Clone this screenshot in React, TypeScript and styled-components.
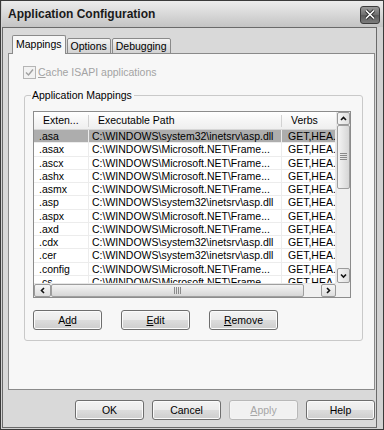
import React from "react";
import styled, { createGlobalStyle } from "styled-components";

const GlobalStyle = createGlobalStyle`
  html, body {
    margin: 0;
    padding: 0;
    background: #ffffff;
  }
  body {
    font-family: "Liberation Sans", Arial, sans-serif;
    font-size: 10.5px;
    color: #000;
  }
`;

const Window = styled.div`
  width: 384px;
  height: 430px;
  box-sizing: border-box;
  border: 1px solid #3a3a3a;
  background: #d2d2d2;
  padding: 0 0 1px 1px;
  display: flex;
  flex-direction: column;
`;

const TitleBar = styled.div`
  height: 26px;
  display: flex;
  align-items: center;
  justify-content: space-between;
  padding: 0 3px 0 6px;
  background: linear-gradient(#ececec, #dadada 45%, #c4c4c4);
`;

const Title = styled.span`
  font-size: 12px;
  font-weight: bold;
  color: #1a1a1a;
`;

const CloseButton = styled.div`
  width: 20px;
  height: 18px;
  box-sizing: border-box;
  border: 1px solid #3c3c3c;
  border-radius: 3px;
  background: linear-gradient(#9a9a9a, #6e6e6e 50%, #5a5a5a 51%, #7c7c7c);
  display: flex;
  align-items: center;
  justify-content: center;
  margin-top: 1px;
`;

const Client = styled.div`
  flex: 1;
  margin-right: 6px;
  border: 1px solid #6a6a6a;
  background: #d9d9d9;
  padding: 7px 1px 0 5px;
  display: flex;
  flex-direction: column;
`;

const TabStrip = styled.div`
  display: flex;
  align-items: flex-end;
  height: 19px;
  padding-left: 4px;
  margin-bottom: -1px;
  position: relative;
  z-index: 1;
`;

const Tab = styled.div<{ $active?: boolean }>`
  box-sizing: border-box;
  height: ${(p) => (p.$active ? "19px" : "16px")};
  padding: ${(p) => (p.$active ? "2px 3px 0" : "1px 3px 0")};
  margin-left: ${(p) => (p.$active ? "0" : "1px")};
  border: 1px solid #8a8a8a;
  border-bottom: ${(p) => (p.$active ? "none" : "1px solid #8a8a8a")};
  border-radius: 2px 2px 0 0;
  background: ${(p) =>
    p.$active ? "#f7f7f7" : "linear-gradient(#f4f4f4, #e2e2e2 50%, #d2d2d2)"};
  line-height: 13px;
  white-space: nowrap;
`;

const Panel = styled.div`
  height: 337px;
  box-sizing: border-box;
  border: 1px solid #8a8a8a;
  background: #f7f7f7;
  padding: 11px 10px 0 14px;
  display: flex;
  flex-direction: column;
`;

const CheckRow = styled.label`
  display: flex;
  align-items: center;
  gap: 2px;
  color: #a3a3a3;
  height: 14px;
`;

const CheckBox = styled.span`
  width: 13px;
  height: 13px;
  box-sizing: border-box;
  border: 1px solid #b5b5b5;
  background: #f2f2f2;
  display: flex;
  align-items: center;
  justify-content: center;
`;

const GroupBox = styled.fieldset`
  margin: 10px 0 0 1px;
  padding: 10px 11px 10px 8px;
  border: 1px solid #c9c9c9;
  border-radius: 3px;
  min-width: 0;
  width: 339px;
  box-sizing: border-box;
`;

const Legend = styled.legend`
  padding: 0 2px 0 1px;
  margin-left: -2px;
  line-height: 12px;
`;

const ListView = styled.div`
  width: 318px;
  height: 187px;
  box-sizing: border-box;
  border: 1px solid #8c8c8c;
  background: #ffffff;
  display: grid;
  grid-template-columns: 1fr 14px;
  grid-template-rows: 1fr 14px;
`;

const Table = styled.div`
  overflow: hidden;
`;

const HeaderRow = styled.div`
  display: grid;
  grid-template-columns: 55px 193px 54px;
  height: 18px;
  box-sizing: border-box;
  border-bottom: 1px solid #d6d6d6;
  background: linear-gradient(#ffffff, #f6f6f6 50%, #efefef);
`;

const HeaderCell = styled.div<{ $pad: number }>`
  padding-left: ${(p) => p.$pad}px;
  line-height: 17px;
  white-space: nowrap;
  overflow: hidden;
  position: relative;
  &:not(:last-child)::after {
    content: "";
    position: absolute;
    right: 0;
    top: 3px;
    bottom: 2px;
    width: 1px;
    background: #d2d2d2;
  }
`;

const Row = styled.div`
  display: grid;
  grid-template-columns: 55px 193px 54px;
  height: 13.25px;
  box-sizing: border-box;
  border-bottom: 1px solid #ececec;
`;

const Cell = styled.div<{ $pad: number; $selected?: boolean }>`
  padding-left: ${(p) => p.$pad}px;
  line-height: 12px;
  white-space: nowrap;
  overflow: hidden;
  border-right: 1px solid #ececec;
  background: ${(p) => (p.$selected ? "#adadad" : "transparent")};
`;

const VScroll = styled.div`
  display: flex;
  flex-direction: column;
  background: #f0f0f0;
  border-left: 1px solid #e6e6e6;
`;

const HScroll = styled.div`
  display: flex;
  background: #f0f0f0;
  border-top: 1px solid #e6e6e6;
`;

const Corner = styled.div`
  background: #f0f0f0;
`;

const ScrollButton = styled.div<{ $len: number; $vertical?: boolean }>`
  flex: none;
  ${(p) => (p.$vertical ? `height: ${p.$len}px;` : `width: ${p.$len}px;`)}
  box-sizing: border-box;
  border: 1px solid #9a9a9a;
  border-radius: 2px;
  background: ${(p) =>
    p.$vertical
      ? "linear-gradient(90deg, #f6f6f6, #dedede)"
      : "linear-gradient(#f6f6f6, #dedede)"};
  display: flex;
  align-items: center;
  justify-content: center;
`;

const Thumb = styled.div<{ $len: number; $vertical?: boolean }>`
  flex: none;
  ${(p) => (p.$vertical ? `height: ${p.$len}px;` : `width: ${p.$len}px;`)}
  box-sizing: border-box;
  border: 1px solid #9e9e9e;
  border-radius: 2px;
  background: ${(p) =>
    p.$vertical
      ? "linear-gradient(90deg, #f4f4f4, #d6d6d6)"
      : "linear-gradient(#f4f4f4, #d6d6d6)"};
  display: flex;
  align-items: center;
  justify-content: center;
`;

const Track = styled.div`
  flex: 1;
`;

const ButtonRow = styled.div<{ $gap: number; $right?: boolean }>`
  display: flex;
  gap: ${(p) => p.$gap}px;
  justify-content: ${(p) => (p.$right ? "flex-end" : "flex-start")};
`;

const GroupButtons = styled(ButtonRow)`
  margin-top: 12px;
`;

const Button = styled.div<{ $disabled?: boolean }>`
  width: 69px;
  height: 20px;
  box-sizing: border-box;
  border: 1px solid ${(p) => (p.$disabled ? "#b8b8b8" : "#6e6e6e")};
  border-radius: 3px;
  box-shadow: inset 0 0 0 1px ${(p) => (p.$disabled ? "#f4f4f4" : "#fbfbfb")};
  background: ${(p) =>
    p.$disabled
      ? "#f1f1f1"
      : "linear-gradient(#f3f3f3, #ebebeb 48%, #dcdcdc 52%, #cdcdcd)"};
  color: ${(p) => (p.$disabled ? "#a6a6a6" : "#000")};
  display: flex;
  align-items: center;
  justify-content: center;
  line-height: 12px;
`;

const Footer = styled(ButtonRow)`
  margin-top: 10px;
`;

const Chevron = ({ dir }: { dir: "up" | "down" | "left" | "right" }) => {
  const pts = {
    up: "2,6 4.5,3.5 7,6",
    down: "2,3.5 4.5,6 7,3.5",
    left: "6,2 3.5,4.5 6,7",
    right: "3,2 5.5,4.5 3,7",
  }[dir];
  return (
    <svg width="9" height="9" viewBox="0 0 9 9">
      <polyline points={pts} fill="none" stroke="#111" strokeWidth="1.6" />
    </svg>
  );
};

const Grip = ({ vertical }: { vertical?: boolean }) => (
  <svg width={vertical ? 7 : 8} height={vertical ? 8 : 7} viewBox={vertical ? "0 0 7 8" : "0 0 8 7"}>
    {[0, 2, 4, 6].map((o) =>
      vertical ? (
        <line key={o} x1="0" x2="7" y1={o + 0.5} y2={o + 0.5} stroke="#8a8a8a" />
      ) : (
        <line key={o} y1="0" y2="7" x1={o + 0.5} x2={o + 0.5} stroke="#8a8a8a" />
      )
    )}
  </svg>
);

const SYS = "C:\\WINDOWS\\system32\\inetsrv\\asp.dll";
const NET = "C:\\WINDOWS\\Microsoft.NET\\Frame...";

const rows: [string, string][] = [
  [".asa", SYS],
  [".asax", NET],
  [".ascx", NET],
  [".ashx", NET],
  [".asmx", NET],
  [".asp", SYS],
  [".aspx", NET],
  [".axd", NET],
  [".cdx", SYS],
  [".cer", SYS],
  [".config", NET],
  [".cs", NET],
];

export default function App() {
  return (
    <>
      <GlobalStyle />
      <Window>
        <TitleBar>
          <Title>Application Configuration</Title>
          <CloseButton>
            <svg width="12" height="11" viewBox="0 0 12 11">
              <path d="M2 1.5 L10 9.5 M10 1.5 L2 9.5" stroke="#2a2a2a" strokeWidth="3.2" />
              <path d="M2 1.5 L10 9.5 M10 1.5 L2 9.5" stroke="#ffffff" strokeWidth="1.6" />
            </svg>
          </CloseButton>
        </TitleBar>
        <Client>
          <TabStrip>
            <Tab $active>Mappings</Tab>
            <Tab>Options</Tab>
            <Tab>Debugging</Tab>
          </TabStrip>
          <Panel>
            <CheckRow>
              <CheckBox>
                <svg width="9" height="9" viewBox="0 0 9 9">
                  <polyline points="1,4.5 3.5,7 8,1.5" fill="none" stroke="#a0a0a0" strokeWidth="1.4" />
                </svg>
              </CheckBox>
              <span>
                <u>C</u>ache ISAPI applications
              </span>
            </CheckRow>
            <GroupBox>
              <Legend>Application Mappings</Legend>
              <ListView>
                <Table>
                  <HeaderRow>
                    <HeaderCell $pad={9}>Exten...</HeaderCell>
                    <HeaderCell $pad={9}>Executable Path</HeaderCell>
                    <HeaderCell $pad={9}>Verbs</HeaderCell>
                  </HeaderRow>
                  {rows.map(([ext, path], i) => (
                    <Row key={ext}>
                      <Cell $pad={5} $selected={i === 0}>{ext}</Cell>
                      <Cell $pad={3} $selected={i === 0}>{path}</Cell>
                      <Cell $pad={6} $selected={i === 0}>GET,HEA...</Cell>
                    </Row>
                  ))}
                </Table>
                <VScroll>
                  <ScrollButton $vertical $len={13}>
                    <Chevron dir="up" />
                  </ScrollButton>
                  <Thumb $vertical $len={64}>
                    <Grip vertical />
                  </Thumb>
                  <Track />
                  <ScrollButton $vertical $len={15}>
                    <Chevron dir="down" />
                  </ScrollButton>
                </VScroll>
                <HScroll>
                  <ScrollButton $len={17}>
                    <Chevron dir="left" />
                  </ScrollButton>
                  <Thumb $len={253}>
                    <Grip />
                  </Thumb>
                  <Track />
                  <ScrollButton $len={15}>
                    <Chevron dir="right" />
                  </ScrollButton>
                </HScroll>
                <Corner />
              </ListView>
              <GroupButtons $gap={19}>
                <Button>
                  <span>
                    A<u>d</u>d
                  </span>
                </Button>
                <Button>
                  <span>
                    <u>E</u>dit
                  </span>
                </Button>
                <Button>
                  <span>
                    <u>R</u>emove
                  </span>
                </Button>
              </GroupButtons>
            </GroupBox>
          </Panel>
          <Footer $gap={8} $right>
            <Button>OK</Button>
            <Button>Cancel</Button>
            <Button $disabled>
              <span>
                <u>A</u>pply
              </span>
            </Button>
            <Button>Help</Button>
          </Footer>
        </Client>
      </Window>
    </>
  );
}
